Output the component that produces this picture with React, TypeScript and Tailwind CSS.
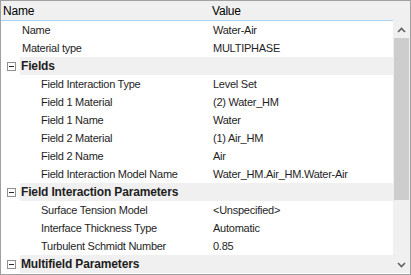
import React from 'react'

type Row =
  | { kind: 'prop'; name: string; value: string; depth: 0 | 1 }
  | { kind: 'cat'; name: string }

const rows: Row[] = [
  { kind: 'prop', name: 'Name', value: 'Water-Air', depth: 0 },
  { kind: 'prop', name: 'Material type', value: 'MULTIPHASE', depth: 0 },
  { kind: 'cat', name: 'Fields' },
  { kind: 'prop', name: 'Field Interaction Type', value: 'Level Set', depth: 1 },
  { kind: 'prop', name: 'Field 1 Material', value: '(2) Water_HM', depth: 1 },
  { kind: 'prop', name: 'Field 1 Name', value: 'Water', depth: 1 },
  { kind: 'prop', name: 'Field 2 Material', value: '(1) Air_HM', depth: 1 },
  { kind: 'prop', name: 'Field 2 Name', value: 'Air', depth: 1 },
  { kind: 'prop', name: 'Field Interaction Model Name', value: 'Water_HM.Air_HM.Water-Air', depth: 1 },
  { kind: 'cat', name: 'Field Interaction Parameters' },
  { kind: 'prop', name: 'Surface Tension Model', value: '<Unspecified>', depth: 1 },
  { kind: 'prop', name: 'Interface Thickness Type', value: 'Automatic', depth: 1 },
  { kind: 'prop', name: 'Turbulent Schmidt Number', value: '0.85', depth: 1 },
  { kind: 'cat', name: 'Multifield Parameters' },
]

function MinusBox() {
  return (
    <div className="flex h-[9px] w-[9px] items-center justify-center border border-[#919191] bg-white">
      <div className="h-px w-[5px] bg-[#2b2b2b]" />
    </div>
  )
}

function Chevron({ down }: { down?: boolean }) {
  return (
    <svg width="9" height="6" viewBox="0 0 9 6" className={down ? 'rotate-180' : ''}>
      <path d="M1 5 L4.5 1.5 L8 5" fill="none" stroke="#606060" strokeWidth="1.6" />
    </svg>
  )
}

export default function App() {
  return (
    <div
      className="h-[275px] w-[411px] overflow-hidden border border-[#a0a0a0] bg-white text-[11px] tracking-[-0.25px] text-black"
      style={{ fontFamily: '"Liberation Sans", Arial, sans-serif' }}
    >
      <div className="flex h-[20px] bg-[#f0f0f0] text-[12px] tracking-[-0.2px]">
        <div className="flex w-[392px] items-center border-b border-[#a9d2f3] leading-none">
          <div className="w-[209px] pl-[2px]">Name</div>
          <div className="pl-[2px]">Value</div>
        </div>
        <div className="w-[17px]" />
      </div>
      <div className="flex h-[252px]">
        <div className="w-[392px]">
          {rows.map((r, i) =>
            r.kind === 'cat' ? (
              <div key={i} className="flex h-[18px] items-center">
                <div className="flex w-[19px] items-center justify-center pl-px">
                  <MinusBox />
                </div>
                <div className="flex h-full flex-1 items-center bg-[#f0f0f0] pl-[1px] text-[12px] font-bold tracking-[-0.15px] text-[#1e1e1e]">
                  {r.name}
                </div>
              </div>
            ) : (
              <div key={i} className="flex h-[18px] items-center text-[#1e1e1e]">
                <div className={`w-[209px] truncate ${r.depth === 0 ? 'pl-[21px]' : 'pl-[40px]'}`}>{r.name}</div>
                <div className="pl-[3px]">{r.value}</div>
              </div>
            )
          )}
        </div>
        <div className="flex w-[17px] flex-col bg-[#f0f0f0]">
          <div className="flex h-[17px] items-center justify-center">
            <Chevron />
          </div>
          <div className="mx-px h-[162px] bg-[#cdcdcd]" />
          <div className="flex-1" />
          <div className="flex h-[17px] items-center justify-center">
            <Chevron down />
          </div>
        </div>
      </div>
    </div>
  )
}
